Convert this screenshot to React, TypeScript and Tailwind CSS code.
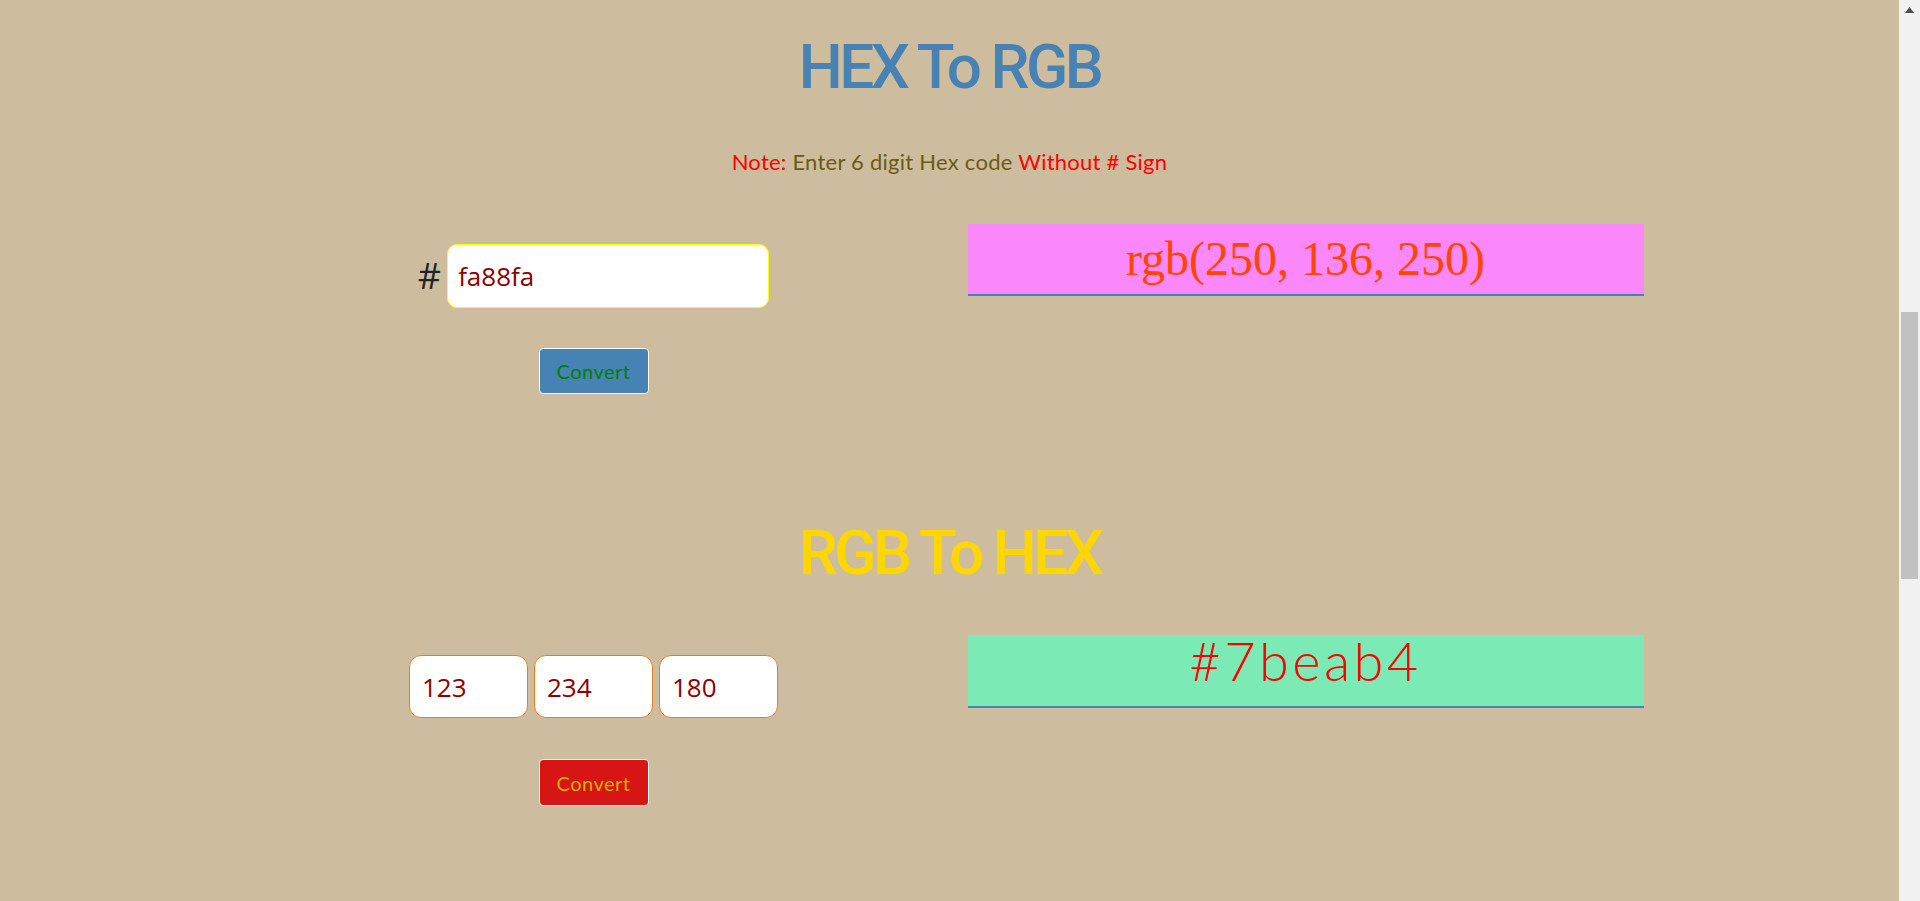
export default function App() {
  return (
    <div className="flex h-screen overflow-hidden bg-[#cebc9f] font-['Lato',sans-serif]">
      <main className="flex-1 pt-[35px]">
        {/* HEX -> RGB */}
        <h1 className="text-center text-[62px] leading-[64px] font-medium tracking-[-3.5px] text-[#4682b4] font-['Roboto',sans-serif]">
          HEX To RGB
        </h1>
        <p className="mt-[51px] text-center text-[22px] leading-[24px] tracking-[0.25px] text-[#6b5b15]">
          <span className="text-[#ff0000]">Note:</span> Enter 6 digit Hex code{" "}
          <span className="text-[#ff0000]">Without # Sign</span>
        </p>

        <div className="mt-[50px] w-[1424px] mx-auto grid grid-cols-2">
          <div className="flex flex-col items-center pt-[20px]">
            <div className="flex items-center gap-[6px]">
              <span className="text-[36px] leading-none text-[#212529] font-['Open_Sans',sans-serif]">#</span>
              <input
                defaultValue="fa88fa"
                className="w-[322px] h-[64px] px-[10px] bg-white border border-[#ffff00] rounded-[10px] text-[26px] text-[#8b0000] outline-none font-['Open_Sans',sans-serif]"
              />
            </div>
            <button className="mt-[40px] w-[110px] h-[46px] bg-[#4682b4] border border-white rounded-[4px] text-[20px] tracking-[0.5px] text-[#008000]">
              Convert
            </button>
          </div>
          <div className="px-[18px]">
            <div className="h-[72px] bg-[#fa88fa] border-b-2 border-[#4682b4] text-center text-[48px] leading-[70px] text-[#ff4500] font-['Liberation_Serif',serif]">
              rgb(250, 136, 250)
            </div>
          </div>
        </div>

        {/* RGB -> HEX */}
        <h1 className="mt-[127px] text-center text-[62px] leading-[64px] font-medium tracking-[-3.5px] text-[#ffd700] font-['Roboto',sans-serif]">
          RGB To HEX
        </h1>

        <div className="mt-[50px] w-[1424px] mx-auto grid grid-cols-2">
          <div className="flex flex-col items-center pt-[20px]">
            <div className="flex gap-[6px]">
              {["123", "234", "180"].map((v) => (
                <input
                  key={v}
                  defaultValue={v}
                  className="w-[119px] h-[63px] px-3 bg-white border border-[#e67e22] rounded-[12px] text-[26px] text-[#8b0000] outline-none font-['Open_Sans',sans-serif]"
                />
              ))}
            </div>
            <button className="mt-[41px] w-[110px] h-[47px] bg-[#d81515] border border-white rounded-[4px] text-[20px] tracking-[0.5px] text-[#d6b000]">
              Convert
            </button>
          </div>
          <div className="px-[18px]">
            <div className="h-[73px] bg-[#7beab4] border-b-2 border-[#4682b4] text-center text-[54px] leading-[52px] font-light tracking-[3.5px] text-[#ff0000]">
              #7beab4
            </div>
          </div>
        </div>
      </main>

      {/* browser scrollbar as seen in the screenshot */}
      <aside className="w-[21px] shrink-0 bg-[#f1f1f1] flex flex-col items-center">
        <svg width="9" height="6" viewBox="0 0 9 6" className="mt-[7px]">
          <path d="M4.5 0 L9 6 L0 6 Z" fill="#505050" />
        </svg>
        <div className="mt-[299px] w-[17px] h-[267px] bg-[#c1c1c1]" />
      </aside>
    </div>
  );
}
